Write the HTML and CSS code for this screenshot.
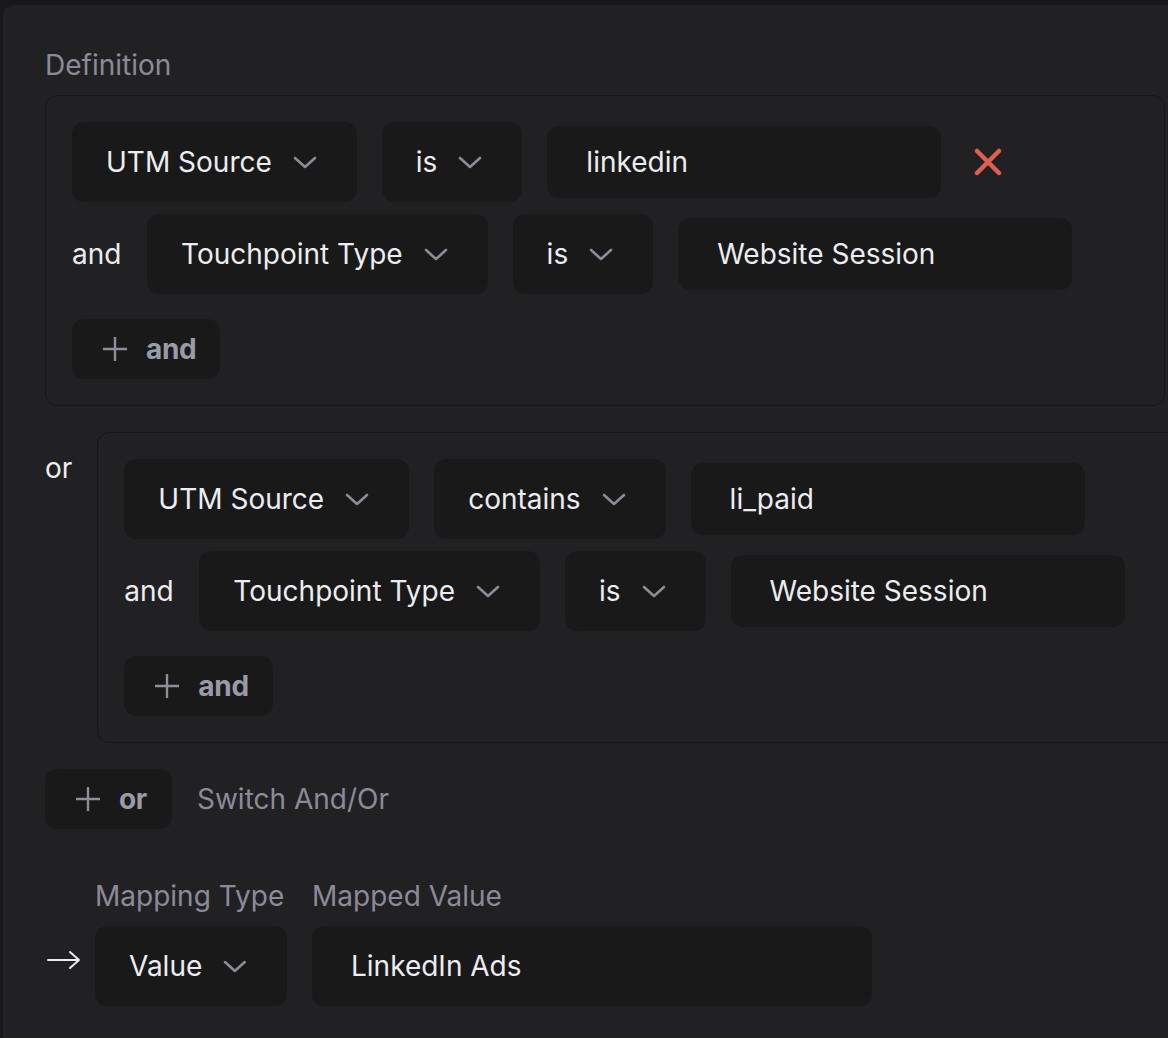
FILE: index.html
```html
<!DOCTYPE html>
<html>
<head>
<meta charset="utf-8">
<link rel="stylesheet" href="styles.css">
</head>
<body>
<div class="panel">
  <div class="section-label">Definition</div>

  <div class="group">
    <div class="row">
      <div class="select">UTM Source <svg class="chev" viewBox="0 0 24 14"><path d="M2 2 L12 11 L22 2"/></svg></div>
      <div class="select">is <svg class="chev" viewBox="0 0 24 14"><path d="M2 2 L12 11 L22 2"/></svg></div>
      <div class="input">linkedin</div>
      <svg class="remove" viewBox="0 0 28 28"><path d="M3 3 L25 25 M25 3 L3 25"/></svg>
    </div>
    <div class="row">
      <div class="conj">and</div>
      <div class="select">Touchpoint Type <svg class="chev" viewBox="0 0 24 14"><path d="M2 2 L12 11 L22 2"/></svg></div>
      <div class="select">is <svg class="chev" viewBox="0 0 24 14"><path d="M2 2 L12 11 L22 2"/></svg></div>
      <div class="input">Website Session</div>
    </div>
    <div class="add-row">
      <div class="add-btn"><svg class="plus" viewBox="0 0 26 26"><path d="M13 1 V25 M1 13 H25"/></svg><span>and</span></div>
    </div>
  </div>

  <div class="or-row">
    <div class="conj or-label">or</div>
    <div class="group">
      <div class="row">
        <div class="select">UTM Source <svg class="chev" viewBox="0 0 24 14"><path d="M2 2 L12 11 L22 2"/></svg></div>
        <div class="select">contains <svg class="chev" viewBox="0 0 24 14"><path d="M2 2 L12 11 L22 2"/></svg></div>
        <div class="input">li_paid</div>
      </div>
      <div class="row">
        <div class="conj">and</div>
        <div class="select">Touchpoint Type <svg class="chev" viewBox="0 0 24 14"><path d="M2 2 L12 11 L22 2"/></svg></div>
        <div class="select">is <svg class="chev" viewBox="0 0 24 14"><path d="M2 2 L12 11 L22 2"/></svg></div>
        <div class="input">Website Session</div>
      </div>
      <div class="add-row">
        <div class="add-btn"><svg class="plus" viewBox="0 0 26 26"><path d="M13 1 V25 M1 13 H25"/></svg><span>and</span></div>
      </div>
    </div>
  </div>

  <div class="actions">
    <div class="add-btn or-btn"><svg class="plus" viewBox="0 0 26 26"><path d="M13 1 V25 M1 13 H25"/></svg><span>or</span></div>
    <div class="switch">Switch And/Or</div>
  </div>

  <div class="mapping">
    <div></div>
    <div class="section-label map-label">Mapping Type</div>
    <div class="section-label map-label value-label">Mapped Value</div>
    <svg class="arrow" viewBox="0 0 34 20"><path d="M1 10 H32 M23 2 L32 10 L23 18"/></svg>
    <div class="select value-select">Value <svg class="chev" viewBox="0 0 24 14"><path d="M2 2 L12 11 L22 2"/></svg></div>
    <div class="input mapped-input">LinkedIn Ads</div>
  </div>
</div>
</body>
</html>
```

FILE: styles.css
```css
html, body {
  margin: 0;
  padding: 0;
  background: #18181a;
  overflow: hidden;
  width: 1168px;
  height: 1038px;
}

body {
  font-family: "Inter", "Liberation Sans", sans-serif;
  font-size: 28px;
  color: #ececf1;
}

.panel {
  margin: 5px 0 0 3px;
  height: 1033px;
  background: #212124;
  border-radius: 10px 0 0 0;
  padding: 43px 0 0 42px;
  box-sizing: border-box;
  width: 1400px;
}

.section-label {
  color: #8b8b98;
  line-height: 34px;
  height: 34px;
  margin-bottom: 13px;
}

.group {
  width: 1120px;
  flex: none;
  box-sizing: border-box;
  border: 1px solid #161618;
  border-radius: 12px;
  padding: 26px;
  display: flex;
  flex-direction: column;
  gap: 12px;
}

.row {
  display: flex;
  align-items: center;
  gap: 25px;
  height: 80px;
}

.conj {
  color: #ececf1;
  line-height: 34px;
  min-width: 50px;
}

.or-label {
  min-width: 26px;
  padding-top: 19px;
}

.select {
  height: 80px;
  box-sizing: border-box;
  background: #19191a;
  border-radius: 12px;
  padding: 0 40px 0 34px;
  display: flex;
  align-items: center;
  gap: 21px;
  white-space: nowrap;
}

.chev {
  width: 24px;
  height: 14px;
  fill: none;
  stroke: #8c8c99;
  stroke-width: 2.6;
  stroke-linecap: round;
  stroke-linejoin: round;
  margin-top: 2px;
}

.input {
  width: 394px;
  height: 72px;
  box-sizing: border-box;
  background: #19191a;
  border-radius: 12px;
  padding: 0 39px;
  display: flex;
  align-items: center;
}

.remove {
  width: 28px;
  height: 28px;
  margin-left: 8px;
  fill: none;
  stroke: #e0604f;
  stroke-width: 4.5;
  stroke-linecap: round;
}

.add-row {
  display: flex;
  margin-top: 13px;
}

.add-btn {
  height: 60px;
  box-sizing: border-box;
  background: #19191a;
  border-radius: 12px;
  padding: 0 24px 0 30px;
  display: flex;
  align-items: center;
  gap: 18px;
  color: #9b9ba8;
  font-weight: 700;
  letter-spacing: -0.3px;
}

.plus {
  width: 26px;
  height: 26px;
  fill: none;
  stroke: #8e8e9b;
  stroke-width: 2.4;
}

.or-row {
  display: flex;
  align-items: flex-start;
  gap: 25px;
  margin-top: 26px;
}

.actions {
  display: flex;
  align-items: center;
  gap: 25px;
  margin-top: 26px;
}

.or-btn {
  height: 60px;
  padding-right: 25px;
}

.switch {
  color: #8b8b98;
}

.mapping {
  display: grid;
  grid-template-columns: 50px 192px 585px;
  margin-top: 50px;
  align-items: center;
}

.map-label {
  margin-bottom: 13px;
}

.value-label {
  margin-left: 25px;
}

.arrow {
  width: 34px;
  height: 20px;
  fill: none;
  stroke: #ececf1;
  stroke-width: 2;
  stroke-linecap: round;
  stroke-linejoin: round;
  margin-left: 2px;
  margin-top: -12px;
}

.value-select {
  width: 192px;
}

.mapped-input {
  width: 560px;
  height: 80px;
  margin-left: 25px;
}
```
